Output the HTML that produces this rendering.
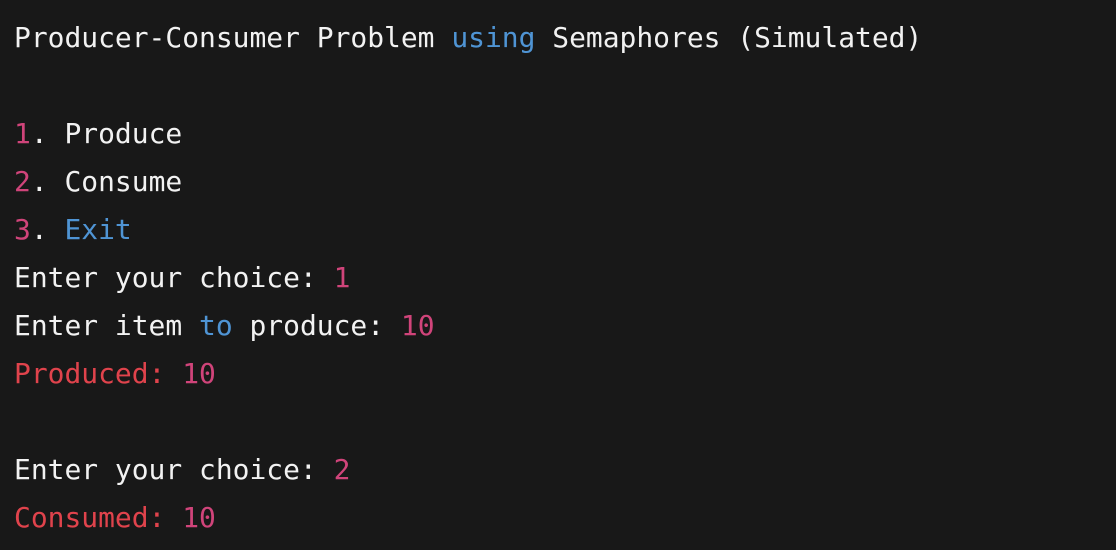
<!DOCTYPE html>
<html><head><style>
html,body{margin:0;background:#181818;width:1116px;height:550px;overflow:hidden}
pre{margin:0;padding:14px 0 0 14px;font-family:"DejaVu Sans Mono","Liberation Mono",monospace;font-size:27.95px;line-height:48px;color:#f2f2f2}
.b{color:#4f94d4}.p{color:#d0447a}.r{color:#e0434c}
</style></head><body><pre>Producer-Consumer Problem <span class="b">using</span> Semaphores (Simulated)

<span class="p">1</span>. Produce
<span class="p">2</span>. Consume
<span class="p">3</span>. <span class="b">Exit</span>
Enter your choice: <span class="p">1</span>
Enter item <span class="b">to</span> produce: <span class="p">10</span>
<span class="r">Produced:</span> <span class="p">10</span>

Enter your choice: <span class="p">2</span>
<span class="r">Consumed:</span> <span class="p">10</span></pre></body></html>
